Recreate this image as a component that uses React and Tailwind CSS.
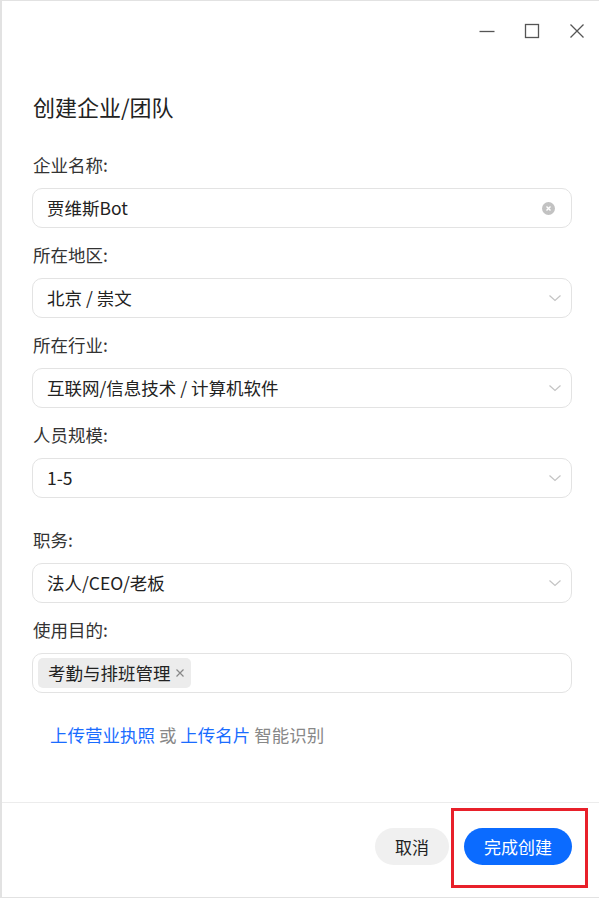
import React from 'react';

const font = { fontFamily: '"Noto Sans CJK SC", "Noto Sans", sans-serif' };

const Chevron = () => (
    <svg width="14" height="14" viewBox="0 0 14 14" className="text-[#c4c4c4]">
        <path d="M1.5 4.5 L7 9.5 L12.5 4.5" fill="none" stroke="currentColor" strokeWidth="1.2" />
    </svg>
);

const Field = ({ label, children, gap = 'mt-[16px]' }) => (
    <div className={gap}>
        <div className="text-[17.5px] leading-[22px] text-[#333] pl-[1px]">{label}</div>
        <div className="mt-[12px] h-[40px] border border-[#e3e3e3] rounded-[10px] flex items-center pl-[14px] pr-[9px] text-[17.5px] text-[#222]">
            {children}
        </div>
    </div>
);

const SelectField = ({ label, value, gap }) => (
    <Field label={label} gap={gap}>
        <span className="flex-1">{value}</span>
        <Chevron />
    </Field>
);

export default function App() {
    return (
        <div style={font} className="relative w-[599px] h-[898px] bg-white border-l-2 border-t border-b border-[#e2e2e2] flex flex-col">
            {/* window controls */}
            <div className="h-[60px] flex items-center justify-end pr-[13px] gap-[27px] text-[#555]">
                <svg width="18" height="18" viewBox="0 0 18 18">
                    <path d="M1.5 9.5 H16.5" stroke="currentColor" strokeWidth="1.3" />
                </svg>
                <svg width="18" height="18" viewBox="0 0 18 18">
                    <rect x="2.5" y="2.5" width="13" height="13" fill="none" stroke="currentColor" strokeWidth="1.3" />
                </svg>
                <svg width="18" height="18" viewBox="0 0 18 18">
                    <path d="M2.5 2.5 L15.5 15.5 M15.5 2.5 L2.5 15.5" stroke="currentColor" strokeWidth="1.3" />
                </svg>
            </div>

            <div className="flex-1 pl-[30px] pr-[27px]">
                <h1 className="mt-[30px] pl-[1px] text-[22px] leading-[30px] text-[#222]">创建企业/团队</h1>

                <Field label="企业名称:" gap="mt-[33px]">
                    <span className="flex-1">贾维斯Bot</span>
                    <span className="w-[13px] h-[13px] rounded-full bg-[#c2c2c2] flex items-center justify-center mr-[7px]">
                        <svg width="7" height="7" viewBox="0 0 7 7">
                            <path d="M1.5 1.5 L5.5 5.5 M5.5 1.5 L1.5 5.5" stroke="white" strokeWidth="1.4" />
                        </svg>
                    </span>
                </Field>
                <SelectField label="所在地区:" value="北京 / 崇文" />
                <SelectField label="所在行业:" value="互联网/信息技术 / 计算机软件" />
                <SelectField label="人员规模:" value="1-5" />
                <SelectField label="职务:" value="法人/CEO/老板" gap="mt-[31px]" />

                <div className="mt-[16px]">
                    <div className="text-[17.5px] leading-[22px] text-[#333] pl-[1px]">使用目的:</div>
                    <div className="mt-[12px] h-[40px] border border-[#e3e3e3] rounded-[10px] flex items-center pl-[5px]">
                        <span className="h-[30px] bg-[#ececec] rounded-[5px] flex items-center pl-[10px] pr-[6px] gap-[4px] text-[17.5px] text-[#222]">
                            考勤与排班管理
                            <svg width="10" height="10" viewBox="0 0 10 10">
                                <path d="M1.5 1.5 L8.5 8.5 M8.5 1.5 L1.5 8.5" stroke="#888" strokeWidth="1.2" />
                            </svg>
                        </span>
                    </div>
                </div>

                <div className="mt-[31px] pl-[18px] text-[17.5px] leading-[22px] text-[#888]">
                    <span className="text-[#1a6cff]">上传营业执照</span> 或 <span className="text-[#1a6cff]">上传名片</span> 智能识别
                </div>
            </div>

            {/* footer */}
            <div className="h-[95px] border-t border-[#ececec] flex items-start justify-end gap-[15px] pr-[27px] pt-[25px]">
                <button className="h-[37px] px-[20px] rounded-full bg-[#f0f0f0] text-[17px] text-[#222]">取消</button>
                <button className="h-[37px] px-[20px] rounded-full bg-[#0b6bff] text-[17px] text-white">完成创建</button>
            </div>

            {/* annotation box */}
            <div className="absolute left-[449px] top-[807px] w-[137px] h-[80px] border-[3px] border-[#e8202a]" />
        </div>
    );
}
